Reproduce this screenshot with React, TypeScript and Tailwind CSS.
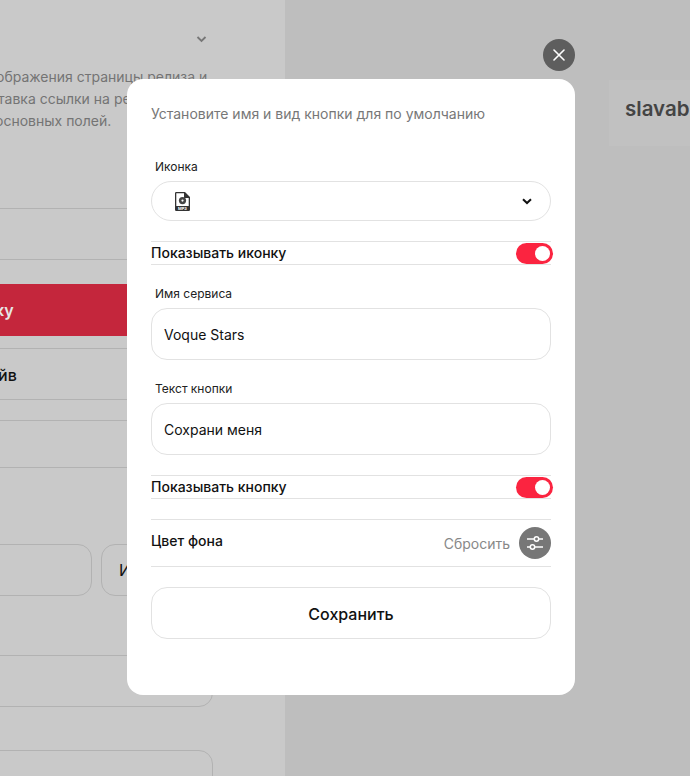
import React from "react";

const Mp3 = () => (
  <svg width="15" height="19" viewBox="0 0 15 19" className="block">
    <path d="M1.2 0H10L15 5V17.8A1.2 1.2 0 0 1 13.8 19H1.2A1.2 1.2 0 0 1 0 17.8V1.2A1.2 1.2 0 0 1 1.2 0Z" fill="#333" />
    <path d="M1.3 1.3H9V6H13.7V14H1.3Z" fill="#fff" />
    <circle cx="7.5" cy="8.6" r="3.6" fill="#444" />
    <circle cx="7.5" cy="8.6" r="1.1" fill="#fff" />
    <text x="7.5" y="17.8" textAnchor="middle" fontSize="4" fontWeight="700" fill="#fff" fontFamily="Inter, sans-serif">MP3</text>
  </svg>
);

const Toggle = () => (
  <div className="-mr-[2px] flex h-[21px] w-[37px] items-center justify-end rounded-full bg-[#fb2440] pr-[3px]">
    <div className="h-[15px] w-[15px] rounded-full bg-white" />
  </div>
);

const ToggleRow = ({ label }: { label: string }) => (
  <div className="flex h-[24px] items-center justify-between border-y border-[#e2e2e2] text-[14px] font-medium text-[#111]">
    <span className="-mt-[2px]">{label}</span>
    <Toggle />
  </div>
);

const Field = ({ label, value }: { label: string; value: string }) => (
  <div className="flex flex-col">
    <label className="mb-[6px] pl-[4px] text-[12px] leading-[16px] text-[#222]">{label}</label>
    <div className="flex h-[52px] items-center rounded-[16px] border border-[#e2e2e2] px-[12px] text-[14px] text-[#111]">{value}</div>
  </div>
);

export default function App() {
  return (
    <div className="relative flex h-[776px] w-[690px] overflow-hidden bg-[#bebebe] font-['Inter',sans-serif]">
      <div className="h-full w-[285px] shrink-0 overflow-hidden bg-[#c9c9c9]">
        <div className="flex w-[213px] flex-col">
          <div className="flex h-[77px] items-center justify-end pr-[6px] pt-[1px]">
            <svg width="11" height="7" viewBox="0 0 11 7" fill="none" stroke="#777" strokeWidth="1.8"><path d="M1.5 1 5.5 5 9.5 1" /></svg>
          </div>
          <div className="-ml-[4px] -mt-[11px] whitespace-nowrap text-[14px] leading-[22px] text-[#747474]">
            <div>ображения страницы релиза и</div>
            <div className="ml-[2px]">тавка ссылки на релиз</div>
            <div className="-ml-[1px]">основных полей.</div>
          </div>
          <div className="-ml-4 mt-[76px] h-[52px] w-[300px] border-y border-[#b2b2b2]" />
          <div className="mt-[24px] flex h-[52px] w-[285px] items-center bg-[#c4263c] text-[16px] font-semibold text-[#e6e6e6]"><span className="-ml-[5px]">ку</span></div>
          <div className="mt-[12px] flex h-[52px] w-[285px] items-center border-y border-[#b2b2b2] text-[16px] font-medium text-[#111]"><span className="-ml-[2px] mt-[2px]">йв</span></div>
          <div className="mt-[20px] h-[48px] w-[285px] border-y border-[#b2b2b2]" />
          <div className="mt-[76px] flex gap-[9px]">
            <div className="-ml-4 h-[52px] w-[108px] shrink-0 rounded-[14px] border border-[#b2b2b2]" />
            <div className="flex h-[52px] w-[100px] shrink-0 items-center rounded-[14px] border border-[#b2b2b2] pl-[17px] text-[16px] text-[#111]">И</div>
          </div>
          <div className="-ml-4 mt-[59px] h-[52px] rounded-r-[14px] border border-[#b2b2b2]" />
          <div className="-ml-4 mt-[43px] h-[60px] rounded-tr-[14px] border border-[#b2b2b2]" />
        </div>
      </div>
      <div className="min-w-0 flex-1 pl-[324px] pt-[80px]">
        <div className="flex h-[66px] items-center overflow-hidden whitespace-nowrap bg-[#c1c1c1] pb-[8px] pl-[16px] text-[20.5px] font-semibold text-[#444]">slavab</div>
      </div>

      <div className="absolute left-[543px] top-[39px] flex h-[32px] w-[32px] items-center justify-center rounded-full bg-[#5e5e5e]">
        <svg width="12" height="12" viewBox="0 0 12 12" stroke="#fff" strokeWidth="1.6" strokeLinecap="round"><path d="M1 1 11 11M11 1 1 11" /></svg>
      </div>

      <div className="absolute left-[127px] top-[79px] flex h-[616px] w-[448px] flex-col rounded-[16px] bg-white px-[24px] pt-[25px]">
        <p className="text-[14px] leading-[20px] text-[#777]">Установите имя и вид кнопки для по умолчанию</p>
        <div className="mt-[35px] flex flex-col">
          <label className="mb-[6px] pl-[4px] text-[12px] leading-[16px] text-[#222]">Иконка</label>
          <div className="flex h-[40px] items-center justify-between rounded-full border border-[#e2e2e2] pl-[23px] pr-[18px]">
            <Mp3 />
            <svg width="10" height="7" viewBox="0 0 10 7" fill="none" stroke="#111" strokeWidth="2"><path d="M1 1.2 5 5 9 1.2" /></svg>
          </div>
        </div>
        <div className="mt-[20px]"><ToggleRow label="Показывать иконку" /></div>
        <div className="mt-[21px]"><Field label="Имя сервиса" value="Voque Stars" /></div>
        <div className="mt-[21px]"><Field label="Текст кнопки" value="Сохрани меня" /></div>
        <div className="mt-[20px]"><ToggleRow label="Показывать кнопку" /></div>
        <div className="mt-[20px] flex h-[48px] items-center justify-between border-y border-[#e2e2e2]">
          <span className="-mt-[6px] text-[14px] font-medium text-[#111]">Цвет фона</span>
          <div className="flex items-center gap-[9px]">
            <span className="text-[14px] text-[#888]">Сбросить</span>
            <div className="flex h-[32px] w-[32px] items-center justify-center rounded-full bg-[#777]">
              <svg width="18" height="18" viewBox="0 0 18 18" fill="none" stroke="#fff" strokeWidth="1.5"><path d="M1 5H8M13 5H17M1 13H4M9 13H17" /><circle cx="10.5" cy="5" r="2.2" /><circle cx="6.5" cy="13" r="2.2" /></svg>
            </div>
          </div>
        </div>
        <button className="mt-[20px] h-[52px] rounded-[16px] border border-[#e2e2e2] pt-[2px] text-[16px] font-medium text-[#111]">Сохранить</button>
      </div>
    </div>
  );
}
